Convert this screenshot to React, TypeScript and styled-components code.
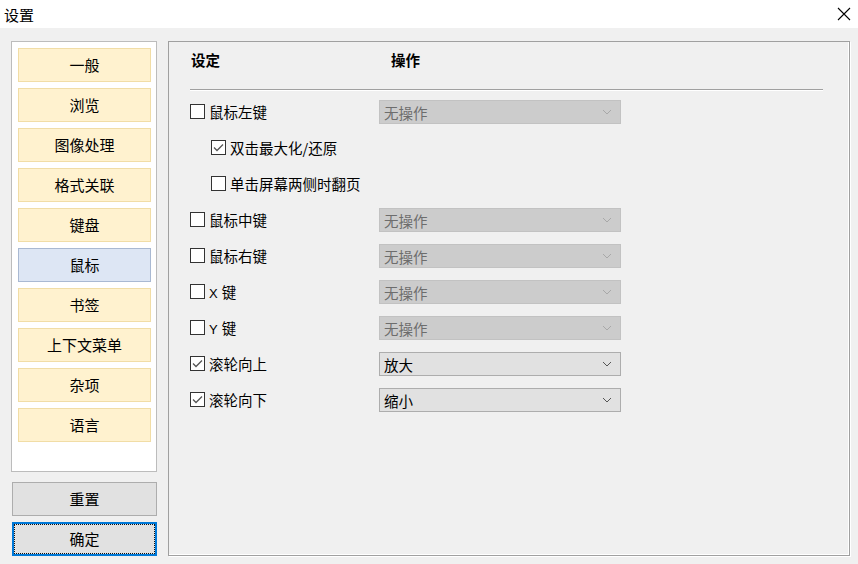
import React from "react";
import styled, { createGlobalStyle } from "styled-components";

const Global = createGlobalStyle`
  html, body { margin: 0; padding: 0; background: #f0f0f0; }
  body { font-family: "Noto Sans CJK SC", "Microsoft YaHei", sans-serif; font-size: 14.5px; color: #000; }
  * { box-sizing: border-box; }
`;

const Window = styled.div`
  width: 858px;
  height: 564px;
  display: flex;
  flex-direction: column;
  background: #f0f0f0;
  overflow: hidden;
`;

const TitleBar = styled.div`
  height: 28px;
  background: #fff;
  display: flex;
  align-items: center;
  justify-content: space-between;
  padding: 0 7px 0 4px;
  font-size: 15px;
`;

const CloseIcon = styled.svg`
  width: 14px;
  height: 14px;
`;

const Body = styled.div`
  flex: 1;
  display: flex;
  padding: 13px 8px 8px 11px;
`;

const LeftColumn = styled.div`
  width: 146px;
  display: flex;
  flex-direction: column;
`;

const NavPanel = styled.div`
  height: 431px;
  background: #fff;
  border: 1px solid #bcbcbc;
  padding: 6px 5px 0 6px;
  display: flex;
  flex-direction: column;
  gap: 6px;
`;

const NavButton = styled.div<{ $active?: boolean }>`
  height: 34px;
  display: flex;
  align-items: center;
  justify-content: center;
  font-size: 15px;
  padding-bottom: 1px;
  background: ${(p) => (p.$active ? "#dde6f4" : "#fff2cf")};
  border: 1px solid ${(p) => (p.$active ? "#a9b9d2" : "#f1dda6")};
`;

const ActionButton = styled.div<{ $focused?: boolean }>`
  height: 34px;
  margin-top: ${(p) => (p.$focused ? "6px" : "10px")};
  margin-left: 1px;
  display: flex;
  align-items: center;
  justify-content: center;
  font-size: 15px;
  padding-bottom: 1px;
  background: #e1e1e1;
  border: ${(p) => (p.$focused ? "2px solid #0078d7" : "1px solid #adadad")};
  outline: ${(p) => (p.$focused ? "1px dotted #111" : "none")};
  outline-offset: -3px;
`;

const RightPanel = styled.div`
  margin-left: 11px;
  width: 682px;
  height: 515px;
  border: 1px solid #a0a0a0;
  box-shadow: inset -1px -1px 0 #fff, 1px 1px 0 #fff;
  padding: 0 26px 0 21px;
  display: flex;
  flex-direction: column;
`;

const Header = styled.div`
  height: 48px;
  display: grid;
  grid-template-columns: 200px 1fr;
  align-items: start;
  padding: 7px 0 0 1px;
  font-weight: bold;
  font-size: 14.5px;
  border-bottom: 1px solid #a0a0a0;
  box-shadow: 0 1px 0 #fff;
`;

const Rows = styled.div`
  padding-top: 3px;
  display: flex;
  flex-direction: column;
`;

const Row = styled.div`
  height: 36px;
  display: grid;
  grid-template-columns: 189px 242px;
  align-items: center;
`;

const CheckLabel = styled.label<{ $indent?: boolean }>`
  display: flex;
  align-items: center;
  gap: 4px;
  padding-left: ${(p) => (p.$indent ? "21px" : "0")};
  white-space: nowrap;
`;

const Box = styled.span`
  width: 15px;
  height: 15px;
  border: 1px solid #333;
  background: #fff;
  display: inline-flex;
  align-items: center;
  justify-content: center;
  flex-shrink: 0;
`;

const Latin = styled.span`
  font-family: "Liberation Sans", Arial, sans-serif;
  font-size: 13px;
  margin-right: 4px;
`;

const Select = styled.div<{ $disabled?: boolean }>`
  height: 24px;
  margin-top: 2px;
  display: flex;
  align-items: center;
  justify-content: space-between;
  padding: 0 8px 0 4px;
  background: ${(p) => (p.$disabled ? "#cccccc" : "#e1e1e1")};
  border: 1px solid ${(p) => (p.$disabled ? "#c2c2c2" : "#adadad")};
  color: ${(p) => (p.$disabled ? "#6d6d6d" : "#000")};
`;

const Chevron = ({ color }: { color: string }) => (
  <svg width="10" height="6" viewBox="0 0 10 6">
    <path d="M1 1l4 4 4-4" fill="none" stroke={color} strokeWidth="1" />
  </svg>
);

const CheckBox = ({ checked }: { checked?: boolean }) => (
  <Box>
    {checked && (
      <svg width="11" height="9" viewBox="0 0 11 9">
        <path d="M1 4.5l3 3L10 1.5" fill="none" stroke="#555" strokeWidth="1.3" />
      </svg>
    )}
  </Box>
);

type RowData = {
  label: React.ReactNode;
  checked?: boolean;
  indent?: boolean;
  select?: { value: string; disabled: boolean };
};

const rows: RowData[] = [
  { label: "鼠标左键", select: { value: "无操作", disabled: true } },
  { label: "双击最大化/还原", checked: true, indent: true },
  { label: "单击屏幕两侧时翻页", indent: true },
  { label: "鼠标中键", select: { value: "无操作", disabled: true } },
  { label: "鼠标右键", select: { value: "无操作", disabled: true } },
  { label: (<><Latin>X</Latin>键</>), select: { value: "无操作", disabled: true } },
  { label: (<><Latin>Y</Latin>键</>), select: { value: "无操作", disabled: true } },
  { label: "滚轮向上", checked: true, select: { value: "放大", disabled: false } },
  { label: "滚轮向下", checked: true, select: { value: "缩小", disabled: false } },
];

const nav = ["一般", "浏览", "图像处理", "格式关联", "键盘", "鼠标", "书签", "上下文菜单", "杂项", "语言"];

export default function App() {
  return (
    <Window>
      <Global />
      <TitleBar>
        <span>设置</span>
        <CloseIcon viewBox="0 0 14 14">
          <path d="M1 1l12 12M13 1L1 13" stroke="#000" strokeWidth="1.1" />
        </CloseIcon>
      </TitleBar>
      <Body>
        <LeftColumn>
          <NavPanel>
            {nav.map((n) => (
              <NavButton key={n} $active={n === "鼠标"}>
                {n}
              </NavButton>
            ))}
          </NavPanel>
          <ActionButton>重置</ActionButton>
          <ActionButton $focused>确定</ActionButton>
        </LeftColumn>
        <RightPanel>
          <Header>
            <span>设定</span>
            <span>操作</span>
          </Header>
          <Rows>
            {rows.map((r, i) => (
              <Row key={i}>
                <CheckLabel $indent={r.indent}>
                  <CheckBox checked={r.checked} />
                  <span>{r.label}</span>
                </CheckLabel>
                {r.select ? (
                  <Select $disabled={r.select.disabled}>
                    <span>{r.select.value}</span>
                    <Chevron color={r.select.disabled ? "#a8a8a8" : "#555"} />
                  </Select>
                ) : (
                  <span />
                )}
              </Row>
            ))}
          </Rows>
        </RightPanel>
      </Body>
    </Window>
  );
}
